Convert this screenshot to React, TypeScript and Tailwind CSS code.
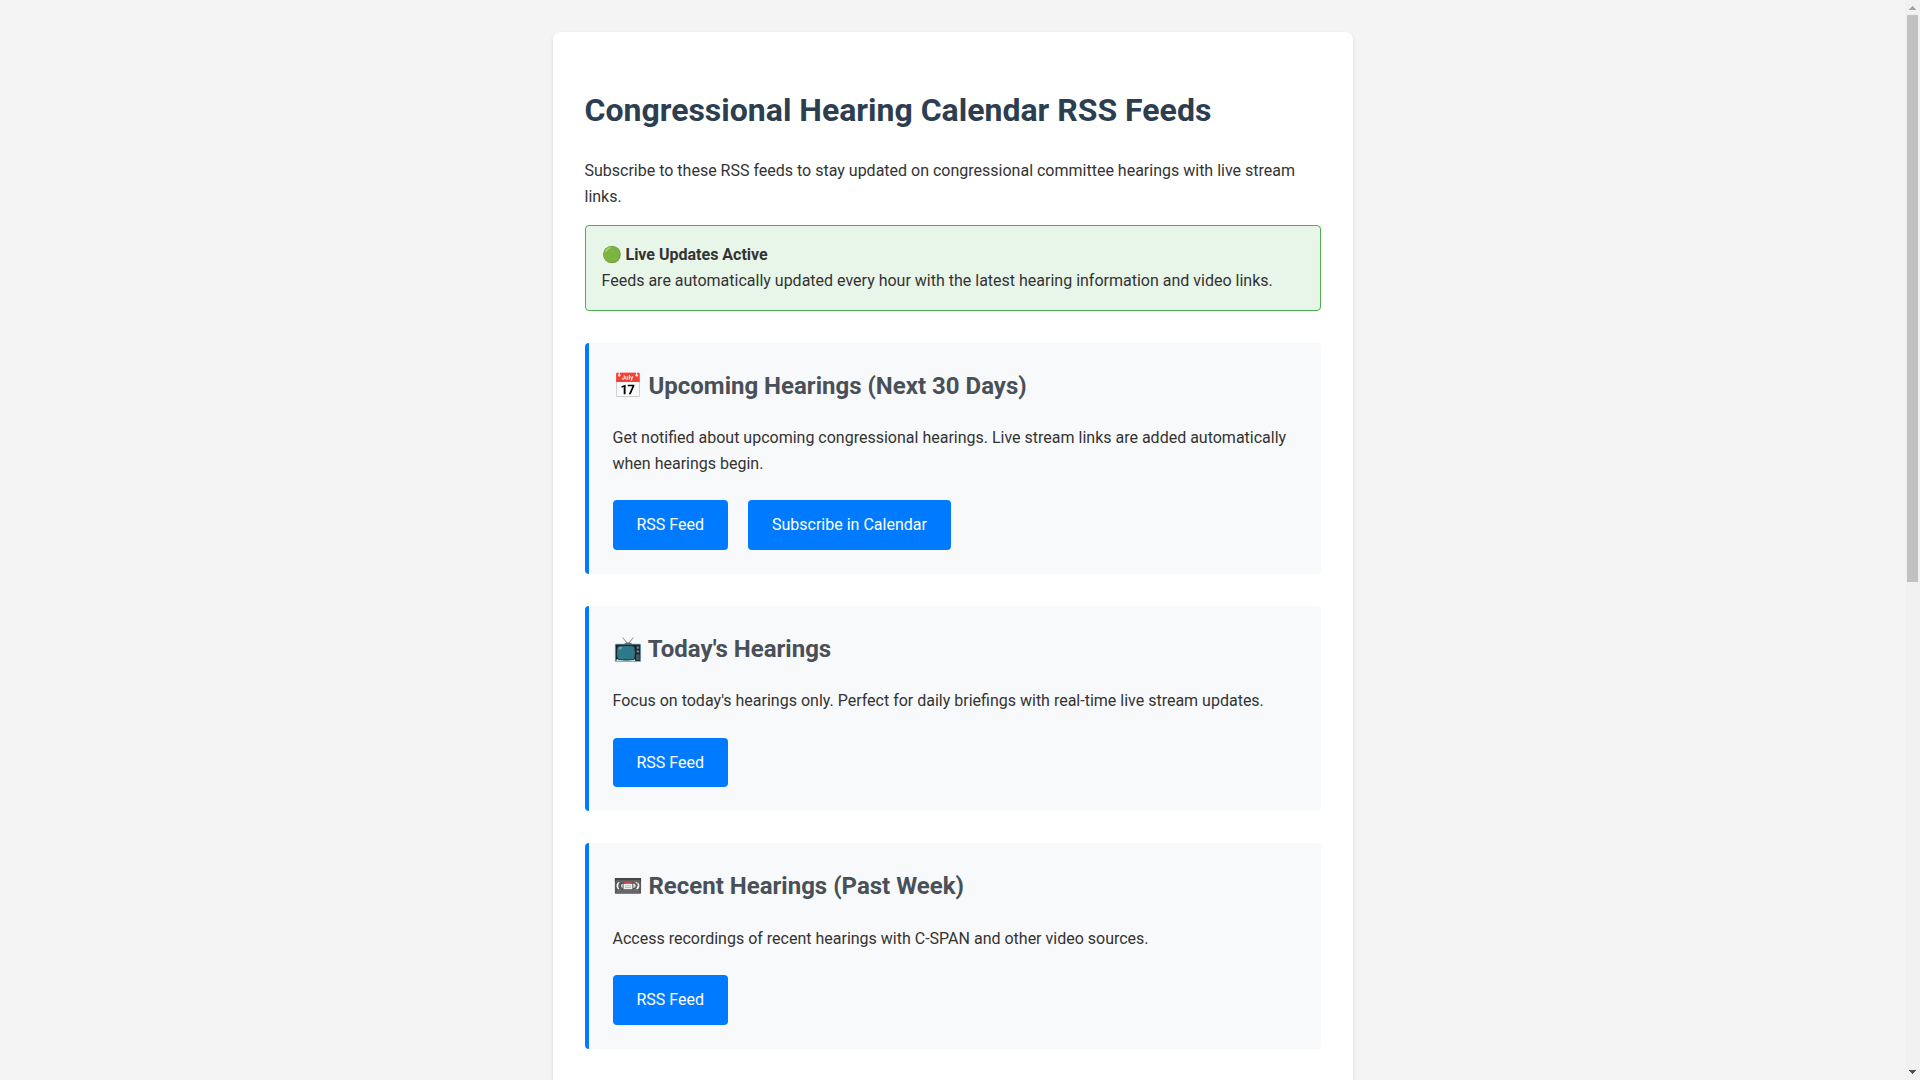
import React from 'react';

interface FeedLink {
  label: string;
  href: string;
}

interface Feed {
  title: string;
  description: string;
  links: FeedLink[];
}

const feeds: Feed[] = [
  {
    title: '📅 Upcoming Hearings (Next 30 Days)',
    description:
      'Get notified about upcoming congressional hearings. Live stream links are added automatically when hearings begin.',
    links: [
      { label: 'RSS Feed', href: '#upcoming' },
      { label: 'Subscribe in Calendar', href: '#calendar' },
    ],
  },
  {
    title: "📺 Today's Hearings",
    description:
      "Focus on today's hearings only. Perfect for daily briefings with real-time live stream updates.",
    links: [{ label: 'RSS Feed', href: '#today' }],
  },
  {
    title: '📼 Recent Hearings (Past Week)',
    description: 'Access recordings of recent hearings with C-SPAN and other video sources.',
    links: [{ label: 'RSS Feed', href: '#recent' }],
  },
];

const FeedCard = ({ title, description, links }: Feed) => (
  <section className="mt-8 rounded border-l-4 border-[#007bff] bg-[#f8f9fa] p-6">
    <h2 className="mb-5 text-2xl leading-[1.6] font-bold text-[#495057]">{title}</h2>
    <p>{description}</p>
    <div className="mt-6 flex flex-wrap gap-5">
      {links.map((link) => (
        <a
          key={link.label}
          href={link.href}
          className="rounded bg-[#007bff] px-6 py-3 text-white hover:bg-[#0056b3]"
        >
          {link.label}
        </a>
      ))}
    </div>
  </section>
);

const ScrollRail = () => (
  <div aria-hidden="true" className="flex w-[15px] shrink-0 flex-col items-center bg-[#f1f1f1]">
    <svg width="15" height="15" viewBox="0 0 15 15" shapeRendering="crispEdges" fill="#a3a3a3">
      <path d="M7 6h1v1h1v1h1v1h1v1H4V9h1V8h1V7h1z" />
    </svg>
    <div className="flex w-full flex-1 flex-col px-[2px]">
      <div className="h-[54%] bg-[#c1c1c1]" />
    </div>
    <svg width="15" height="15" viewBox="0 0 15 15" shapeRendering="crispEdges" fill="#505050">
      <path d="M4 5h7v1h-1v1H9v1H8v1H7V8H6V7H5V6H4z" />
    </svg>
  </div>
);

const App = () => {
  return (
    <div className="flex h-screen bg-[#f4f4f4] font-[Roboto,sans-serif] text-base leading-[1.6] text-[#333]">
      <div className="flex-1 overflow-y-auto">
        <main className="mx-auto my-8 min-h-[179vh] max-w-[800px] rounded-lg bg-white p-8 shadow-[0_2px_4px_rgba(0,0,0,0.1)]">
          <h1 className="mt-[21px] mb-[22px] text-[32px] leading-[1.6] font-bold text-[#2c3e50]">
            Congressional Hearing Calendar RSS Feeds
          </h1>
          <p>
            Subscribe to these RSS feeds to stay updated on congressional committee hearings with
            live stream links.
          </p>

          <div className="mt-4 rounded border border-[#4caf50] bg-[#e8f5e9] p-4">
            <strong className="block">🟢 Live Updates Active</strong>
            Feeds are automatically updated every hour with the latest hearing information and video
            links.
          </div>

          {feeds.map((feed) => (
            <FeedCard key={feed.title} {...feed} />
          ))}
        </main>
      </div>
      <ScrollRail />
    </div>
  );
};

export default App;
